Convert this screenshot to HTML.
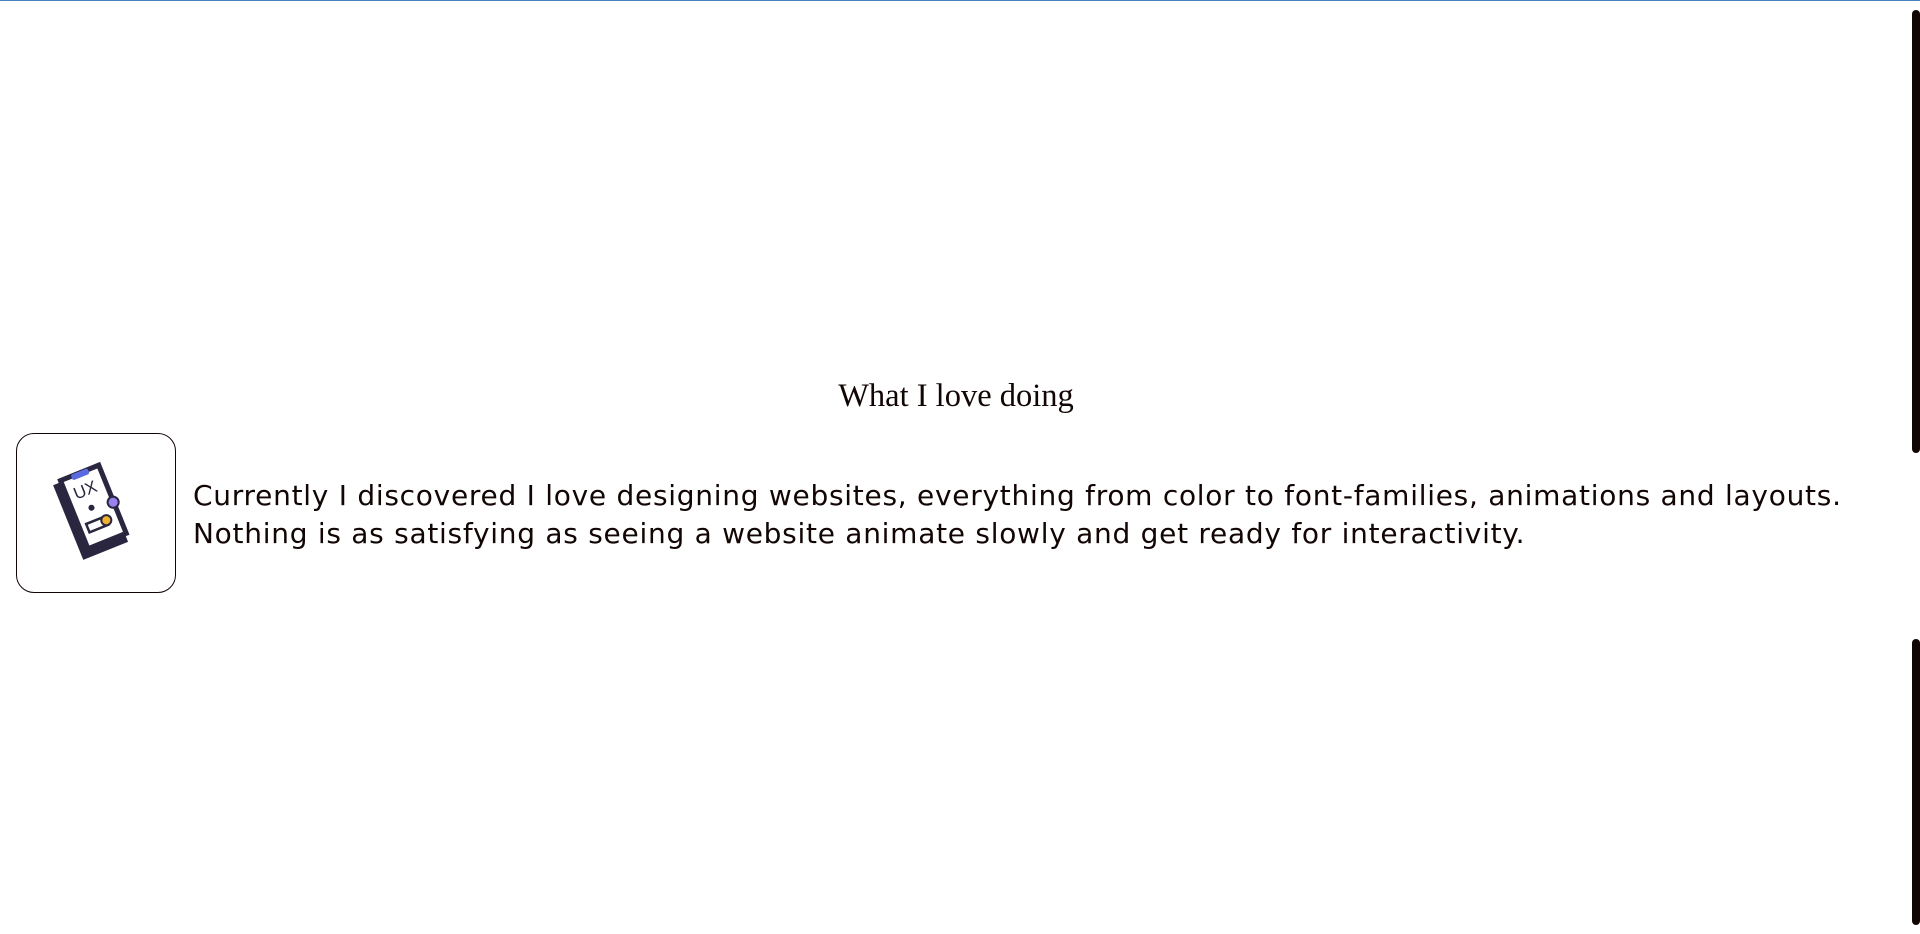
<!DOCTYPE html>
<html><head><style>
html,body{margin:0;padding:0;background:#fff;width:1920px;height:934px;overflow:hidden;position:relative}
.top{position:absolute;left:0;top:0;width:1920px;height:1px;background:#4a7fc0}
.bar{position:absolute;left:1912px;width:8px;background:#120604;border-radius:4px}
h2{position:absolute;left:0;width:1912px;top:378px;margin:0;text-align:center;font:32.5px "Liberation Serif",serif;color:#120604}
.box{position:absolute;left:16px;top:433px;width:160px;height:160px;border:1px solid #120604;border-radius:18px;box-sizing:border-box}
.txt{position:absolute;left:193px;top:477px;font:28px/38px "DejaVu Sans","Liberation Sans",sans-serif;color:#120604;white-space:nowrap;letter-spacing:0.73px}
</style></head><body>
<div class="top"></div>
<div class="bar" style="top:10px;height:443px"></div>
<div class="bar" style="top:639px;height:286px"></div>
<h2>What I love doing</h2>
<div class="box">
<svg width="160" height="160" viewBox="0 0 158 159" style="position:absolute;left:-1px;top:-1px">
<g transform="rotate(-22 79 80)">
<rect x="50" y="38" width="48" height="80" fill="#2a2640"/>
<rect x="56" y="34" width="46" height="78" fill="#2a2640"/>
<rect x="61" y="39" width="36" height="68" fill="#fff"/>
<rect x="70" y="35" width="18" height="6" rx="2" fill="#5a6be0"/>
<text x="66" y="60" font-family="Liberation Sans,sans-serif" font-size="17" fill="#2a2640">UX</text>
<circle cx="77" cy="73" r="3" fill="#2a2640"/>
<rect x="66" y="86" width="20" height="9" fill="#fff" stroke="#2a2640" stroke-width="2.5"/>
<circle cx="86" cy="90" r="5" fill="#f0b030" stroke="#2a2640" stroke-width="2"/>
<circle cx="99" cy="76" r="5.5" fill="#9a80f0" stroke="#2a2640" stroke-width="2"/>
</g>
</svg>
</div>
<div class="txt">Currently I discovered I love designing websites, everything from color to font-families, animations and layouts.<br>Nothing is as satisfying as seeing a website animate slowly and get ready for interactivity.</div>
</body></html>
